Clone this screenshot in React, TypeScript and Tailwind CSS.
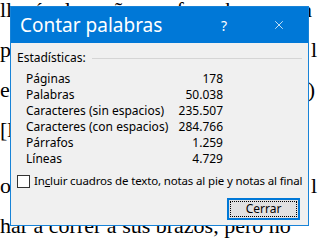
import { X } from "lucide-react";

const stats = [
  { label: "Páginas", value: "178" },
  { label: "Palabras", value: "50.038" },
  { label: "Caracteres (sin espacios)", value: "235.507" },
  { label: "Caracteres (con espacios)", value: "284.766" },
  { label: "Párrafos", value: "1.259" },
  { label: "Líneas", value: "4.729" },
];

// texto del documento detrás del diálogo: sólo asoman los bordes
const docLines = [
  { left: "llegó a la mañana y fue a buscar", right: "en", pr: "pr-[10px]", gap: "" },
  { left: "para que la viera con él antes de", right: "l", pr: "pr-[5px]", gap: "" },
  { left: "entonces le dijo que no podía", right: ")", pr: "pr-[7px]", gap: "" },
  { left: "[las cosas que tenía en la casa", right: "", pr: "", gap: "" },
  { left: "o que sería mejor que se fuera", right: "l", pr: "pr-[5px]", gap: "mt-[16px]" },
];

const App = () => {
  return (
    <div className="relative w-[322px] h-[238px] overflow-hidden bg-white">
      {/* documento de fondo */}
      <div className="flex flex-col -mt-[10px] font-['Liberation_Serif',serif] text-[22px] leading-[40px] text-black whitespace-nowrap">
        {docLines.map((l, i) => (
          <div key={i} className={`flex justify-between ${l.pr} ${l.gap}`}>
            <span>{l.left}</span>
            <span>{l.right}</span>
          </div>
        ))}
        <div>har a correr a sus brazos, pero no</div>
      </div>

      {/* diálogo */}
      <div className="absolute left-[10px] top-[6px] w-[299px] h-[220px] flex flex-col border border-[#1883d7] bg-[#f0f0f0] font-['Noto_Sans',sans-serif] text-[12px] text-black">
        <div className="h-[36px] flex items-center bg-[#0078d7] text-white shrink-0">
          <span className="pl-[9px] text-[19px] leading-none flex-1">Contar palabras</span>
          <span className="w-[20px] text-center text-[14px] mr-[38px]">?</span>
          <X className="w-[14px] h-[14px] mr-[22px]" strokeWidth={1.3} />
        </div>

        <div className="flex flex-col pl-[6px] pr-[6px]">
          <div className="flex items-center h-[16px] mt-[7px]">
            <span className="leading-[16px]">Estadísticas:</span>
            <div className="flex-1 h-px bg-[#d5d5d5] ml-[6px]" />
          </div>

          <div className="flex flex-col pl-[9px] mt-[5px]">
            {stats.map((s) => (
              <div key={s.label} className="flex justify-between w-[197px] h-[16px] leading-[16px]">
                <span>{s.label}</span>
                <span>{s.value}</span>
              </div>
            ))}
          </div>

          <div className="flex items-center mt-[6px] h-[16px]">
            <div className="w-[13px] h-[13px] shrink-0 border border-[#333] bg-white" />
            <span className="ml-[4px] leading-[16px] whitespace-nowrap text-[11.5px] tracking-[-0.15px]">
              In<span className="underline">c</span>luir cuadros de texto, notas al pie y notas al final
            </span>
          </div>

          <div className="flex justify-end mt-[9px] pr-[2px]">
            <div className="w-[73px] h-[22px] border-2 border-[#0078d7] bg-[#e1e1e1] p-[1px]">
              <div className="w-full h-full border border-dotted border-black flex items-center justify-center leading-none">
                Cerrar
              </div>
            </div>
          </div>
        </div>
      </div>
    </div>
  );
};

export default App;
